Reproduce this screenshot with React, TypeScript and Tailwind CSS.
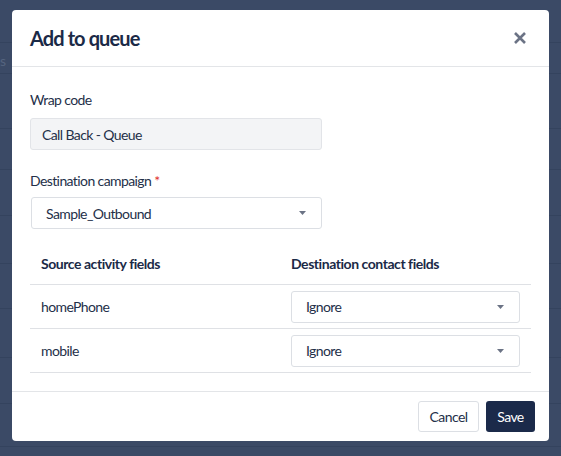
import React from "react";

function Caret() {
  return (
    <svg width="7" height="4" viewBox="0 0 7 4" className="shrink-0">
      <path d="M0 0 L7 0 L3.5 4 Z" fill="#6b7385" />
    </svg>
  );
}

function Select({ value, className }: { value: string; className: string }) {
  return (
    <div
      className={
        "flex items-center justify-between rounded-[3px] border border-[#dcdfe4] bg-white pl-[14px] pr-[15px] text-[14px] tracking-[-0.6px] text-[#243049] " +
        className
      }
    >
      <span>{value}</span>
      <Caret />
    </div>
  );
}

export default function App() {
  const bgLines = [42, 73, 128, 169, 215, 263, 308, 357, 403, 446];
  return (
    <div
      className="relative h-[456px] w-[561px] overflow-hidden bg-[#3b4a66]"
      style={{ fontFamily: "Lato, 'Open Sans', sans-serif" }}
    >
      {bgLines.map((y) => (
        <div
          key={y}
          className="absolute left-0 right-0 h-px bg-[#34435e]"
          style={{ top: y }}
        />
      ))}
      <div className="absolute left-0 top-[50px] text-[14px] text-[#55647f]">s</div>

      <div className="absolute left-[12px] top-[10px] flex h-[431px] w-[537px] flex-col rounded-[4px] bg-white">
        {/* Header */}
        <div className="flex h-[57px] items-center justify-between border-b border-[#e3e5e8] pl-[18px] pr-[22px]">
          <h2 className="text-[20px] font-bold tracking-[-0.9px] text-[#1b2a47]">Add to queue</h2>
          <svg width="14" height="14" viewBox="0 0 14 14">
            <path d="M2 2 L12 12 M12 2 L2 12" stroke="#6b7385" strokeWidth="2.6" strokeLinecap="butt" />
          </svg>
        </div>

        {/* Body */}
        <div className="flex flex-1 flex-col px-[18px] pt-[23px] tracking-[-0.6px]">
          <div>
            <div className="h-[20px] text-[14px] leading-[20px] text-[#243049]">Wrap code</div>
            <div className="mt-[8px] flex h-[32px] w-[292px] items-center rounded-[3px] border border-[#e2e4e8] bg-[#f3f4f6] pl-[11px] text-[14px] text-[#243049]">
              Call Back - Queue
            </div>
            <div className="mt-[21px] h-[20px] text-[14px] leading-[20px] text-[#243049]">
              Destination campaign<span className="ml-[3px] text-[#e0302b]">*</span>
            </div>
            <Select value="Sample_Outbound" className="ml-[1px] mt-[6px] h-[32px] w-[291px]" />
          </div>

          {/* Table */}
          <div className="mt-[14px] w-[501px]">
            <div className="grid h-[42px] grid-cols-[250px_1fr] items-center border-b border-[#dfe1e5] text-[14px] font-bold tracking-[-0.45px] text-[#1b2a47]">
              <div className="pl-[11px]">Source activity fields</div>
              <div className="pl-[11px]">Destination contact fields</div>
            </div>
            {["homePhone", "mobile"].map((f) => (
              <div
                key={f}
                className="grid h-[44px] grid-cols-[250px_1fr] items-center border-b border-[#dfe1e5] text-[14px] text-[#243049]"
              >
                <div className="pl-[11px]">{f}</div>
                <div className="pl-[11px] pr-[11px]">
                  <Select value="Ignore" className="h-[32px] w-full" />
                </div>
              </div>
            ))}
          </div>
        </div>

        {/* Footer */}
        <div className="flex h-[50px] items-center justify-end gap-[7px] border-t border-[#e3e5e8] pr-[14px] pb-[1px] tracking-[-0.6px]">
          <button className="flex h-[31px] w-[61px] items-center justify-center rounded-[3px] border border-[#dcdfe4] bg-white text-[14px] text-[#243049]">
            Cancel
          </button>
          <button className="flex h-[31px] w-[49px] items-center justify-center rounded-[3px] bg-[#1b2a4a] text-[14px] text-white">
            Save
          </button>
        </div>
      </div>
    </div>
  );
}
